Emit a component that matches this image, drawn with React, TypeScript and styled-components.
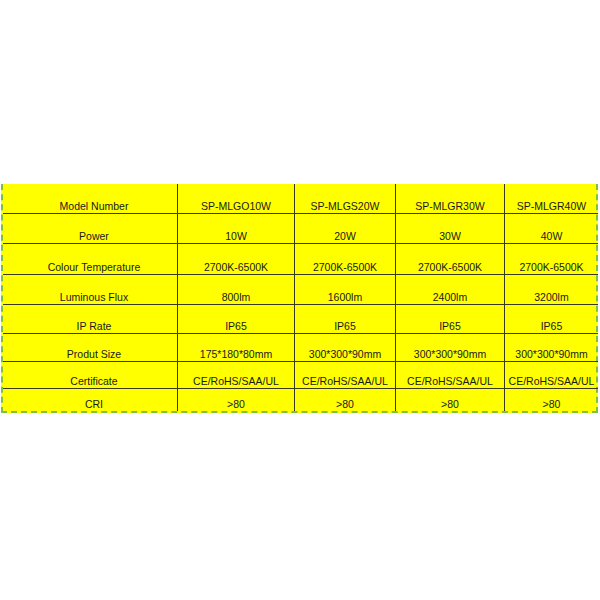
import React from "react";
import styled, { createGlobalStyle } from "styled-components";

const Global = createGlobalStyle`
  html, body { margin: 0; padding: 0; background: #ffffff; }
  body { font-family: "Liberation Sans", Arial, sans-serif; }
`;

const Page = styled.div`
  width: 600px;
  height: 600px;
  padding-top: 184px;
  box-sizing: border-box;
  background: #ffffff;
`;

const Sheet = styled.div`
  margin-left: 1px;
  width: 597px;
  box-sizing: border-box;
  display: grid;
  grid-template-columns: 175px 117px 101px 109px 93px;
  grid-template-rows: 30px 30px 31px 30px 29px 28px 27px 22px;
  background: #ffff00;
  border-left: 2px dashed #7cc242;
  border-right: 2px dashed #7cc242;
  border-bottom: 2px dashed #7cc242;
`;

const Cell = styled.div<{ $last: boolean; $lastRow: boolean; $first: boolean }>`
  box-sizing: border-box;
  display: flex;
  align-items: flex-end;
  justify-content: center;
  padding: 0 2px 1px ${(p) => (p.$first ? "10px" : "2px")};
  font-size: 10.5px;
  line-height: 12px;
  color: #1a1a1a;
  white-space: nowrap;
  border-right: ${(p) => (p.$last ? "none" : "1px solid #3a3a1a")};
  border-bottom: ${(p) => (p.$lastRow ? "none" : "1px solid #3a3a1a")};
`;

const rows: string[][] = [
  ["Model Number", "SP-MLGO10W", "SP-MLGS20W", "SP-MLGR30W", "SP-MLGR40W"],
  ["Power", "10W", "20W", "30W", "40W"],
  ["Colour Temperature", "2700K-6500K", "2700K-6500K", "2700K-6500K", "2700K-6500K"],
  ["Luminous Flux", "800lm", "1600lm", "2400lm", "3200lm"],
  ["IP Rate", "IP65", "IP65", "IP65", "IP65"],
  ["Produt Size", "175*180*80mm", "300*300*90mm", "300*300*90mm", "300*300*90mm"],
  ["Certificate", "CE/RoHS/SAA/UL", "CE/RoHS/SAA/UL", "CE/RoHS/SAA/UL", "CE/RoHS/SAA/UL"],
  ["CRI", ">80", ">80", ">80", ">80"],
];

export default function App() {
  return (
    <>
      <Global />
      <Page>
        <Sheet>
          {rows.map((r, ri) =>
            r.map((c, ci) => (
              <Cell
                key={`${ri}-${ci}`}
                $first={ci === 0}
                $last={ci === r.length - 1}
                $lastRow={ri === rows.length - 1}
              >
                {c}
              </Cell>
            ))
          )}
        </Sheet>
      </Page>
    </>
  );
}
